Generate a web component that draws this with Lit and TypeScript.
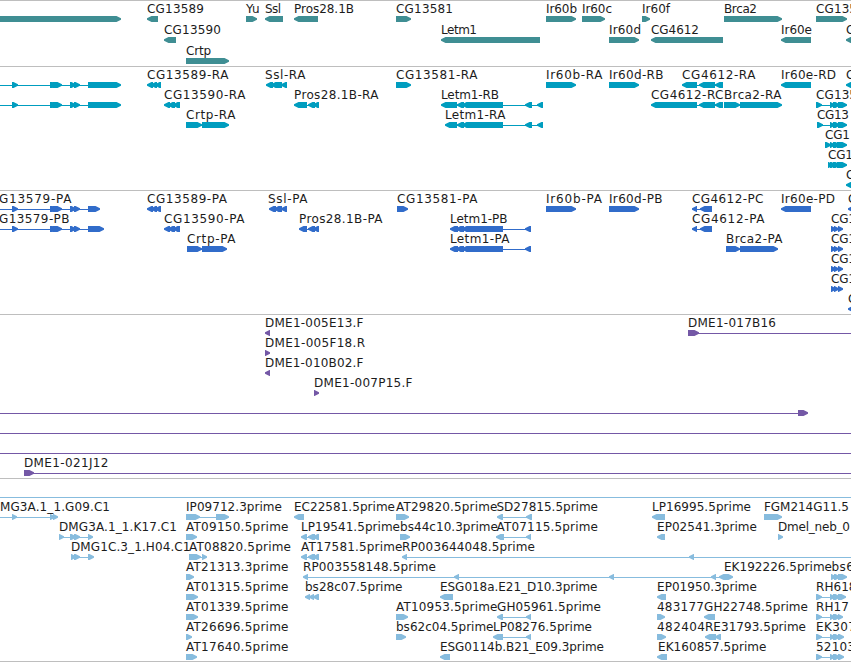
import { LitElement, html, svg, css } from "lit";
import { customElement, property } from "lit/decorators.js";

type Segment = [number, number];
type Direction = ">" | "<";

interface Feature {
  row: number;
  dir: Direction;
  segs: Segment[];
  label?: string;
  x?: number;
  end?: number;
  line?: Segment;
}

interface TrackData {
  name: string;
  height: number;
  top: number;
  step: number;
  features: Feature[];
}

// Builds a feature; segments are written as "12-17 50-55".
const f = (
  row: number,
  label: string,
  x: number,
  end: number,
  dir: Direction,
  segs: string,
  line?: Segment
): Feature => ({
  row,
  label,
  x,
  end,
  dir,
  line,
  segs: segs
    ? segs.split(" ").map((s) => s.split("-").map(Number) as Segment)
    : [],
});

const LEFT_EXONS = "12-18 50-57 53-62 70-76 74-80 88-";
const LETM = "457-464 462-503 525-532 537-543";
const LETM_P = "450-458 456-464 462-503 525-531";
const NEB = "816-822 830-835 833-840 838-";

const TRACKS: TrackData[] = [
  {
    name: "gene",
    height: 66,
    top: 16,
    step: 21,
    features: [
      f(0, "", 0, 0, ">", "0-121"),
      f(0, "CG13589", 147, 204, "<", "147-158"),
      f(0, "Yu", 246, 259.5, ">", "246-257"),
      f(0, "Ssl", 265, 281, "<", "265-283"),
      f(0, "Pros28.1B", 294, 354, "<", "294-318"),
      f(0, "CG13581", 396, 453, ">", "396-411"),
      f(0, "Ir60b", 546, 577, ">", "546-576"),
      f(0, "Ir60c", 582, 612, ">", "582-605"),
      f(0, "Ir60f", 642, 670, ">", "642-650"),
      f(0, "Brca2", 724, 757, ">", "724-782"),
      f(0, "CG135", 816, 857, ">", "816-847"),
      f(1, "CG13590", 164, 221, "<", "164-176"),
      f(1, "Letm1", 441, 477, "<", "441-540"),
      f(1, "Ir60d", 609, 641, ">", "609-639"),
      f(1, "CG4612", 651, 699, "<", "651-723"),
      f(1, "Ir60e", 781, 812, "<", "781-811"),
      f(1, "C", 846, 854, "<", "846-870"),
      f(2, "Crtp", 186, 211, ">", "186-229"),
    ],
  },
  {
    name: "transcript",
    height: 124,
    top: 16,
    step: 20,
    features: [
      f(0, "", 0, 0, ">", LEFT_EXONS + "121", [0, 88]),
      f(0, "CG13589-RA", 147, 228.5, "<", "147-153 151-157 155-161"),
      f(0, "Ssl-RA", 265, 305.5, "<", "266-273 271-282 281-287"),
      f(0, "CG13581-RA", 396, 477.5, ">", "396-411"),
      f(0, "Ir60b-RA", 546, 602.5, ">", "546-576"),
      f(0, "Ir60d-RB", 609, 663.5, ">", "609-639"),
      f(0, "CG4612-RA", 682, 755.5, "<", "682-697 699-715 715-723"),
      f(0, "Ir60e-RD", 781, 836, "<", "781-811"),
      f(0, "C", 846, 854, "<", "846-870"),
      f(1, "", 0, 0, ">", LEFT_EXONS + "121", [0, 88]),
      f(1, "CG13590-RA", 164, 245.5, "<", "164-170 168-175 173-180"),
      f(1, "Pros28.1B-RA", 294, 378.5, "<", "294-307 308-315 313-319"),
      f(1, "Letm1-RB", 441, 499, "<", "441-457 " + LETM),
      f(1, "CG4612-RC", 651, 723.5, "<", "651-697 699-715 715-723"),
      f(1, "Brca2-RA", 724, 781.5, ">", "724-740 740-782"),
      f(1, "CG135", 816, 857, ">", NEB + "847"),
      f(2, "Crtp-RA", 186, 235.5, ">", "186-202 202-229"),
      f(2, "Letm1-RA", 445, 505.5, "<", "445-457 " + LETM),
      f(2, "CG13", 817, 849, ">", "817-823 830-835 833-840 838-847"),
      f(3, "CG1", 825, 850, ">", "825-831 830-835 833-840 837-847"),
      f(4, "CG1", 828, 853, ">", "828-833 830-836 833-840 837-847"),
      f(5, "C", 846, 854, "<", "846-870"),
    ],
  },
  {
    name: "protein",
    height: 124,
    top: 16,
    step: 20,
    features: [
      f(0, "G13579-PA", -1, 71.5, ">", LEFT_EXONS + "100", [0, 88]),
      f(0, "CG13589-PA", 147, 227, "<", "147-153 151-157 155-161"),
      f(0, "Ssl-PA", 268, 307.5, "<", "269-276 274-282 281-287"),
      f(0, "CG13581-PA", 397, 477.5, ">", "397-408"),
      f(0, "Ir60b-PA", 546, 602, ">", "546-576"),
      f(0, "Ir60d-PB", 609, 662.5, ">", "609-639"),
      f(0, "CG4612-PC", 692, 763.5, "<", "692-697 700-712"),
      f(0, "Ir60e-PD", 781, 835, "<", "781-811"),
      f(0, "C", 848, 856, "<", "848-870"),
      f(1, "G13579-PB", -1, 69.5, ">", LEFT_EXONS + "104", [0, 88]),
      f(1, "CG13590-PA", 164, 244.5, "<", "164-170 168-175 173-180"),
      f(1, "Pros28.1B-PA", 299, 382.5, "<", "299-307 308-315 313-319"),
      f(1, "Letm1-PB", 450, 507.5, "<", LETM_P),
      f(1, "CG4612-PA", 692, 764.5, "<", "692-697 700-712"),
      f(1, "CG1", 831, 856, ">", "831-836 834-839 838-843"),
      f(2, "Crtp-PA", 187, 235.5, ">", "187-202 202-227"),
      f(2, "Letm1-PA", 450, 509.5, "<", LETM_P),
      f(2, "Brca2-PA", 726, 782.5, ">", "726-740 740-778"),
      f(2, "CG1", 831, 856, ">", "831-836 834-839 838-843"),
      f(3, "CG1", 831, 856, ">", "831-836 834-839 838-843"),
      f(4, "CG1", 831, 856, ">", "831-836 834-839 838-843"),
      f(5, "C", 848, 856, "<", "848-870"),
    ],
  },
  {
    name: "bac",
    height: 164,
    top: 16,
    step: 20,
    features: [
      f(0, "DME1-005E13.F", 265, 363.5, "<", "265-270"),
      f(0, "DME1-017B16", 688, 776, ">", "688-699", [695, 860]),
      f(1, "DME1-005F18.R", 265, 365, ">", "265-270"),
      f(2, "DME1-010B02.F", 265, 363.5, "<", "265-270"),
      f(3, "DME1-007P15.F", 314, 412.5, ">", "314-319"),
      f(4, "", 0, 0, ">", "798-808", [0, 800]),
      f(5, "", 0, 0, ">", "", [0, 860]),
      f(6, "", 0, 0, ">", "", [0, 860]),
      f(7, "DME1-021J12", 24, 108.5, ">", "24-34", [30, 860]),
    ],
  },
  { name: "empty", height: 19, top: 0, step: 0, features: [] },
  {
    name: "est",
    height: 164,
    top: 17,
    step: 20,
    features: [
      f(0, "MG3A.1_1.G09.C1", 0, 110, ">", "12-17 50-55 53-58", [0, 54]),
      f(0, "IP09712.3prime", 186, 282, ">", "186-200 216-229"),
      f(0, "EC22581.5prime", 294, 395, "<", "294-304"),
      f(0, "AT29820.5prime", 396, 497.5, ">", "396-409"),
      f(0, "SD27815.5prime", 496.5, 598, "<", "497-503 526-532"),
      f(0, "LP16995.5prime", 652, 751, "<", "652-665"),
      f(0, "FGM214G11.5", 764, 849, ">", "764-782"),
      f(1, "DMG3A.1_1.K17.C1", 59, 177, ">", "59-64 70-76 74-80 88-93"),
      f(1, "AT09150.5prime", 186, 288.5, ">", "186-197"),
      f(1, "LP19541.5prime", 301, 400, "<", "301-307 308-315 313-319"),
      f(1, "bs44c10.3prime", 400, 498, ">", "400-410"),
      f(1, "AT07115.5prime", 496.5, 598, "<", "496-504 526-531"),
      f(1, "EP02541.3prime", 657, 757, "<", "657-665"),
      f(1, "Dmel_neb_0", 778, 850, ">", "778-783"),
      f(2, "DMG1C.3_1.H04.C1", 71, 190.5, ">", "71-76 74-80 88-94"),
      f(2, "AT08820.5prime", 189, 291, ">", "189-201 202-207"),
      f(2, "AT17581.5prime", 301, 402.5, "<", "301-307 308-315 313-319"),
      f(2, "RP003644048.5prime", 402, 535, "<", "402-407 689-694", [405, 860]),
      f(3, "AT21313.3prime", 186, 288.5, ">", "186-194"),
      f(3, "RP003558148.5prime", 303, 436, "<", "303-308 454-459 609-614 711-716 719-728"),
      f(3, "EK192226.5prime", 724, 832, ">", "724-733"),
      f(3, "bs6", 831.5, 854, ">", "831-836 834-840 838-847"),
      f(4, "AT01315.5prime", 186, 288.5, ">", "186-198"),
      f(4, "bs28c07.5prime", 305, 402.5, "<", "305-310 309-314 313-319"),
      f(4, "ESG018a.E21_D10.3prime", 440, 597.5, "<", "440-453"),
      f(4, "EP01950.3prime", 657, 757, "<", "657-666"),
      f(4, "RH618", 816, 856.5, ">", NEB + "846"),
      f(5, "AT01339.5prime", 186, 288.5, ">", "186-198"),
      f(5, "AT10953.5prime", 396, 497.5, ">", "396-408"),
      f(5, "GH05961.5prime", 497, 601, "<", "497-503 526-531"),
      f(5, "483177", 657, 704, ">", "657-665"),
      f(5, "GH22748.5prime", 704, 808, "<", "704-715"),
      f(5, "RH17", 816, 849, ">", NEB + "843"),
      f(6, "AT26696.5prime", 186, 288.5, ">", "186-192"),
      f(6, "bs62c04.5prime", 396, 493.5, ">", "396-406"),
      f(6, "LP08276.5prime", 493, 592, "<", "493-503 526-531"),
      f(6, "482404", 657, 705, ">", "657-666"),
      f(6, "RE31793.5prime", 705, 806, "<", "705-716 715-721"),
      f(6, "EK307", 816, 856, ">", NEB + "844"),
      f(7, "AT17640.5prime", 186, 288.5, ">", "186-197"),
      f(7, "ESG0114b.B21_E09.3prime", 440, 604, "<", "440-450"),
      f(7, "EK160857.5prime", 658, 766.5, "<", "657-667"),
      f(7, "52103", 816, 855, ">", NEB + "844"),
    ],
  },
];

@customElement("genome-track")
export class GenomeTrack extends LitElement {
  @property({ attribute: false }) track!: TrackData;

  static styles = css`
    :host {
      display: block;
      overflow: hidden;
    }
    svg {
      display: block;
      overflow: hidden;
    }
    text {
      font-family: "DejaVu Sans", sans-serif;
      font-size: 12px;
      fill: #1c1c1c;
      white-space: pre;
    }
    .rule { fill: #bebebe; }
    .gene { fill: #3f8e93; }
    .transcript { fill: #009dbf; }
    .protein { fill: #316cca; }
    .bac { fill: #7458a6; }
    .est { fill: #87bcde; }
  `;

  private arrow([a, b]: Segment, y: number, dir: Direction) {
    const head = Math.min(5, b - a);
    const d =
      dir === ">"
        ? `M${a} ${y}H${b - head + 0.5}L${b} ${y + 2.2}V${y + 3.8}L${b - head + 0.5} ${y + 6}H${a}Z`
        : `M${b} ${y}H${a + head - 0.5}L${a} ${y + 2.2}V${y + 3.8}L${a + head - 0.5} ${y + 6}H${b}Z`;
    return svg`<path d=${d}></path>`;
  }

  private feature(ft: Feature) {
    const y = this.track.top + ft.row * this.track.step;
    const span: Segment | undefined =
      ft.line ??
      (ft.segs.length > 1
        ? [ft.segs[0][0] + 2, ft.segs[ft.segs.length - 1][1] - 2]
        : undefined);
    return svg`
      <g class=${this.track.name}>
        ${span
          ? svg`<rect x=${span[0]} y=${y + 3} width=${span[1] - span[0]} height="1"></rect>`
          : null}
        ${ft.segs.map((s) => this.arrow(s, y, ft.dir))}
      </g>
      ${ft.label
        ? svg`<text x=${ft.x!} y=${y - 3} textLength=${ft.end! - ft.x!}>${ft.label}</text>`
        : null}`;
  }

  render() {
    const t = this.track;
    return html`<svg width="851" height=${t.height}>
      <rect class=${t.name === "est" ? "est" : "rule"} width="851" height="1"></rect>
      ${t.features.map((ft) => this.feature(ft))}
    </svg>`;
  }
}

@customElement("app-root")
export class AppRoot extends LitElement {
  static styles = css`
    :host {
      display: flex;
      flex-direction: column;
      width: 851px;
      height: 662px;
      overflow: hidden;
      background: #fff;
    }
    .end {
      height: 1px;
      background: #bebebe;
    }
  `;

  render() {
    return html`
      ${TRACKS.map((t) => html`<genome-track .track=${t}></genome-track>`)}
      <div class="end"></div>
    `;
  }
}
